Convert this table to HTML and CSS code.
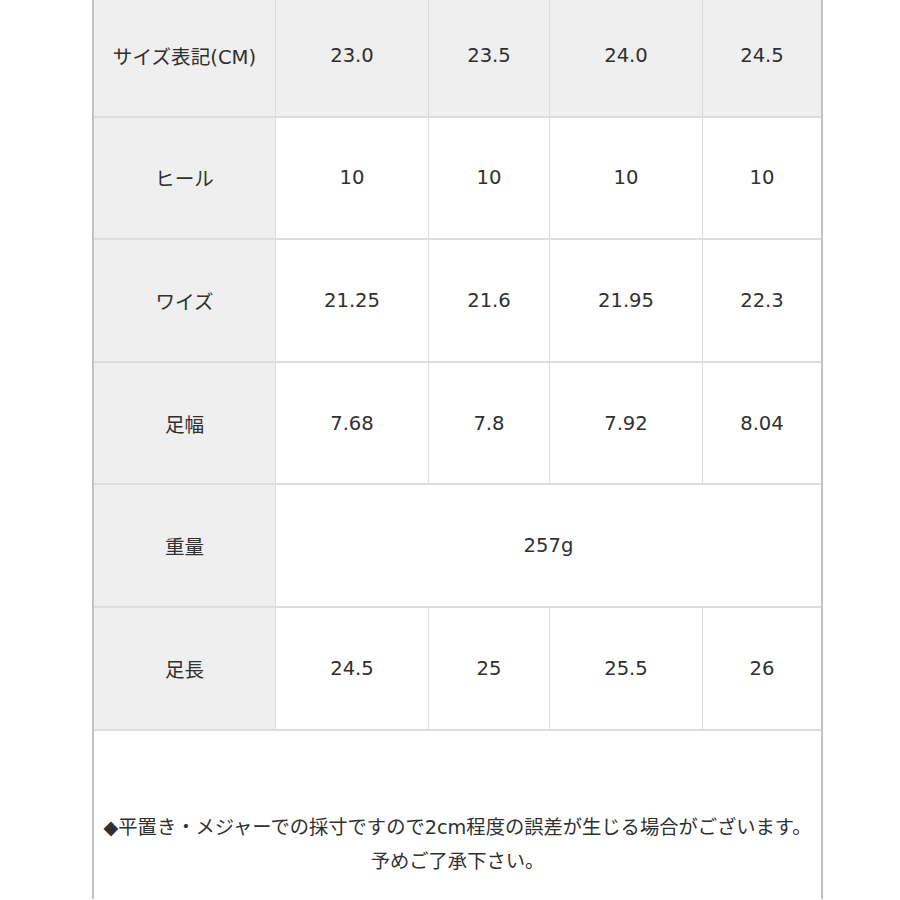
FILE: index.html
```html
<!DOCTYPE html>
<html lang="ja">
<head>
<meta charset="utf-8">
<title>サイズ表</title>
<link rel="stylesheet" href="styles.css">
</head>
<body>
<div class="sheet">
  <div class="grid">
    <div class="cell head">サイズ表記(CM)</div>
    <div class="cell head">23.0</div>
    <div class="cell head">23.5</div>
    <div class="cell head">24.0</div>
    <div class="cell head">24.5</div>

    <div class="cell head">ヒール</div>
    <div class="cell">10</div>
    <div class="cell">10</div>
    <div class="cell">10</div>
    <div class="cell">10</div>

    <div class="cell head">ワイズ</div>
    <div class="cell">21.25</div>
    <div class="cell">21.6</div>
    <div class="cell">21.95</div>
    <div class="cell">22.3</div>

    <div class="cell head">足幅</div>
    <div class="cell">7.68</div>
    <div class="cell">7.8</div>
    <div class="cell">7.92</div>
    <div class="cell">8.04</div>

    <div class="cell head">重量</div>
    <div class="cell span4">257g</div>

    <div class="cell head">足長</div>
    <div class="cell">24.5</div>
    <div class="cell">25</div>
    <div class="cell">25.5</div>
    <div class="cell">26</div>

    <div class="note">
      <p>◆平置き・メジャーでの採寸ですので2cm程度の誤差が生じる場合がございます。</p>
      <p>予めご了承下さい。</p>
    </div>
  </div>
</div>
</body>
</html>
```

FILE: styles.css
```css
html, body {
  margin: 0;
  padding: 0;
  background: #ffffff;
}

body {
  font-family: "DejaVu Sans", "Noto Sans CJK JP", sans-serif;
  color: #303030;
}

.sheet {
  margin: -5px 0 0 92px;
  width: 731px;
}

.grid {
  display: grid;
  grid-template-columns: 181px 152px 120px 152px 118px;
  grid-template-rows: repeat(6, 120.6px) auto;
  column-gap: 1px;
  row-gap: 2px;
  background: #dddddd;
  border-left: 2px solid #c2c2c2;
  border-right: 2px solid #c2c2c2;
}

.cell {
  display: flex;
  align-items: center;
  justify-content: center;
  background: #ffffff;
  font-size: 19.6px;
}

.cell.head {
  background: #efefef;
}

.span4 {
  grid-column: span 4;
}

.note {
  grid-column: 1 / -1;
  background: #ffffff;
  height: 168px;
  padding-top: 80px;
  box-sizing: border-box;
  text-align: center;
  font-size: 19.3px;
  line-height: 34px;
}

.note p {
  margin: 0;
}
```
